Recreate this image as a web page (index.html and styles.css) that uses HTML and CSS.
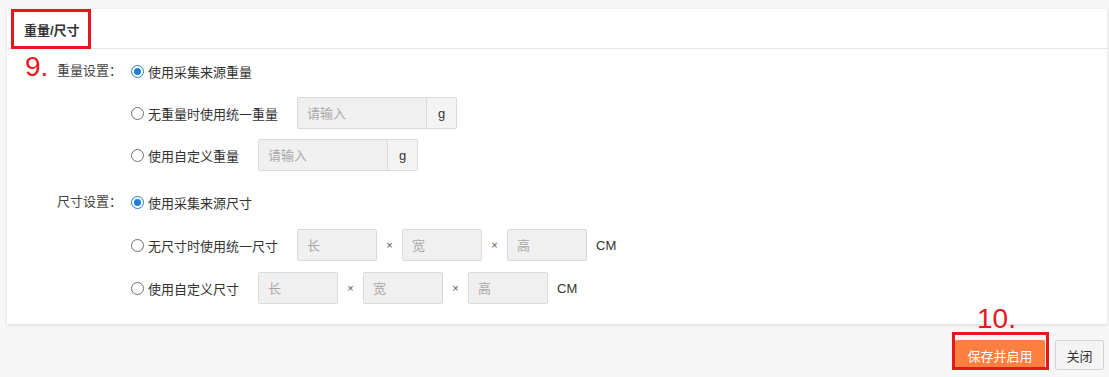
FILE: index.html
```html
<!DOCTYPE html>
<html lang="zh-CN">
<head>
    <meta charset="UTF-8">
    <title>重量/尺寸</title>
    <link rel="stylesheet" href="styles.css">
</head>
<body>
    <div class="panel">
        <div class="panel-head">
            <span class="panel-title">重量/尺寸</span>
        </div>
        <span class="mark mark-9">9.</span>

        <div class="panel-body">
            <div class="setting">
                <div class="setting-label">重量设置：</div>
                <div class="options">
                    <div class="option">
                        <span class="radio checked"></span>
                        <span class="option-text">使用采集来源重量</span>
                    </div>
                    <div class="option">
                        <span class="radio"></span>
                        <span class="option-text">无重量时使用统一重量</span>
                        <div class="input-group">
                            <input class="field field-wide" placeholder="请输入">
                            <span class="addon">g</span>
                        </div>
                    </div>
                    <div class="option">
                        <span class="radio"></span>
                        <span class="option-text">使用自定义重量</span>
                        <div class="input-group">
                            <input class="field field-wide" placeholder="请输入">
                            <span class="addon">g</span>
                        </div>
                    </div>
                </div>
            </div>

            <div class="setting setting-size">
                <div class="setting-label">尺寸设置：</div>
                <div class="options">
                    <div class="option">
                        <span class="radio checked"></span>
                        <span class="option-text">使用采集来源尺寸</span>
                    </div>
                    <div class="option">
                        <span class="radio"></span>
                        <span class="option-text">无尺寸时使用统一尺寸</span>
                        <div class="dims">
                            <input class="field" placeholder="长">
                            <span class="times">×</span>
                            <input class="field" placeholder="宽">
                            <span class="times">×</span>
                            <input class="field" placeholder="高">
                            <span class="unit">CM</span>
                        </div>
                    </div>
                    <div class="option">
                        <span class="radio"></span>
                        <span class="option-text">使用自定义尺寸</span>
                        <div class="dims">
                            <input class="field" placeholder="长">
                            <span class="times">×</span>
                            <input class="field" placeholder="宽">
                            <span class="times">×</span>
                            <input class="field" placeholder="高">
                            <span class="unit">CM</span>
                        </div>
                    </div>
                </div>
            </div>
        </div>
    </div>

    <div class="footer">
        <span class="save-wrap">
            <span class="mark mark-10">10.</span>
            <button class="btn btn-primary">保存并启用</button>
        </span>
        <button class="btn btn-default">关闭</button>
    </div>
</body>
</html>
```

FILE: styles.css
```css
body {
    margin: 0;
    background: #f7f7f7;
    font-family: "Liberation Sans", "Noto Sans CJK SC", sans-serif;
    font-size: 13px;
    color: #333;
}
.panel {
    position: relative;
    margin: 9px 2px 0 7px;
    background: #fff;
    box-shadow: 0 1px 3px rgba(20, 20, 60, 0.14);
}
.panel-head {
    height: 39px;
    border-bottom: 1px solid #e6e6e6;
    display: flex;
}
.panel-title {
    box-sizing: border-box;
    height: 40px;
    margin: 0 0 -1px 4px;
    padding: 0 8px 0 10px;
    border: 3px solid #e8161d;
    display: flex;
    align-items: center;
    font-weight: bold;
    color: #333;
}
.mark {
    position: absolute;
    color: #e8161d;
    font-family: "Liberation Sans", sans-serif;
    font-size: 28px;
    line-height: 28px;
}
.mark-9 {
    left: 18px;
    top: 44px;
}
.panel-body {
    padding: 6px 0 20px 50px;
}
.setting {
    display: flex;
}
.setting-size {
    margin-top: 15px;
}
.setting-label {
    width: 74px;
    height: 32px;
    line-height: 32px;
    color: #444;
}
.options {
    display: flex;
    flex-direction: column;
    gap: 10px;
}
.setting-size .options {
    gap: 11px;
}
.option {
    display: flex;
    align-items: center;
    height: 32px;
}
.radio {
    box-sizing: border-box;
    width: 13px;
    height: 13px;
    border: 1px solid #6e6e6e;
    border-radius: 50%;
    margin-right: 4px;
    position: relative;
}
.radio.checked {
    border-color: #1f7fd8;
}
.radio.checked::after {
    content: "";
    position: absolute;
    left: 2px;
    top: 2px;
    width: 7px;
    height: 7px;
    border-radius: 50%;
    background: #1f7fd8;
}
.option-text {
    color: #333;
    margin-right: 19px;
}
.input-group {
    display: flex;
}
.field {
    box-sizing: border-box;
    width: 80px;
    height: 32px;
    padding: 0 9px;
    border: 1px solid #dadada;
    border-radius: 2px;
    background: #f0f0f0;
    font: inherit;
    color: #333;
    outline: none;
}
.field::placeholder {
    color: #a8a8a8;
}
.field-wide {
    width: 130px;
    border-radius: 2px 0 0 2px;
}
.addon {
    box-sizing: border-box;
    width: 30px;
    height: 32px;
    border: 1px solid #dadada;
    border-left: none;
    border-radius: 0 2px 2px 0;
    background: #f4f4f4;
    display: flex;
    align-items: center;
    justify-content: center;
    color: #333;
}
.dims {
    display: flex;
    align-items: center;
}
.times {
    width: 25px;
    text-align: center;
    font-size: 11px;
    color: #555;
}
.unit {
    margin-left: 9px;
    color: #333;
}
.footer {
    display: flex;
    justify-content: flex-end;
    gap: 10px;
    padding: 16px 5px 0 0;
}
.save-wrap {
    position: relative;
    display: flex;
}
.save-wrap::after {
    content: "";
    position: absolute;
    left: -3px;
    right: -4px;
    top: -8px;
    bottom: 0;
    border: 3px solid #e8161d;
}
.mark-10 {
    left: 22px;
    top: -35px;
}
.btn {
    height: 30px;
    border-radius: 2px;
    font-family: "Liberation Sans", "Noto Sans CJK SC", sans-serif;
    font-size: 13px;
    cursor: pointer;
}
.btn-primary {
    width: 90px;
    border: none;
    background: #ff7f40;
    color: #fff;
}
.btn-default {
    width: 49px;
    border: 1px solid #d2d2d2;
    background: #f4f4f4;
    color: #333;
}
```
